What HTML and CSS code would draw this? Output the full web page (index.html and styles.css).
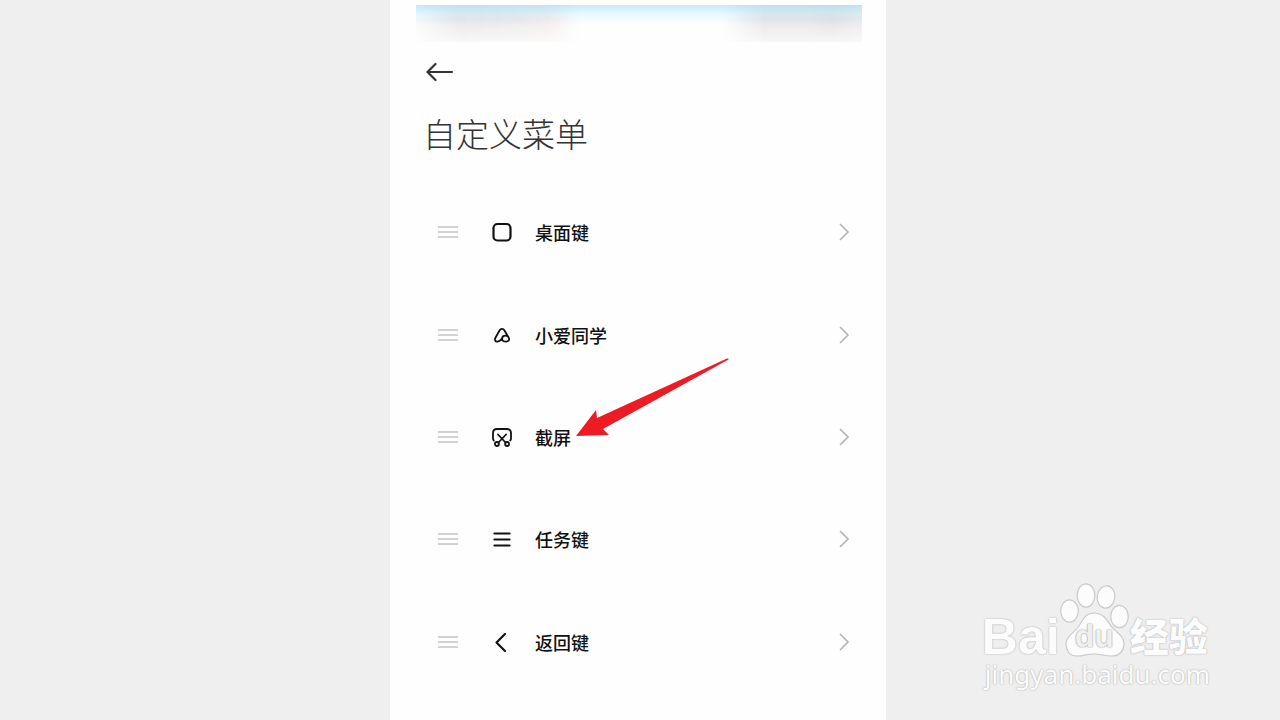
FILE: index.html
```html
<!DOCTYPE html>
<html lang="zh-CN">
<head>
<meta charset="utf-8">
<meta name="viewport" content="width=device-width, initial-scale=1">
<title>自定义菜单</title>
<link rel="stylesheet" href="styles.css">
</head>
<body class="page">
<main class="phone">
  <div class="status"><span class="smudge smudge-left"></span><span class="smudge smudge-right"></span></div>
  <header class="head">
    <button class="back" type="button" aria-label="返回">
      <svg width="28" height="20" viewBox="0 0 28 20"><path d="M26 10H1.500M9.500 2L1.500 10l8 8" fill="none" stroke="#333" stroke-width="2.200" stroke-linecap="round" stroke-linejoin="round"/></svg>
    </button>
    <h1 class="title">自定义菜单</h1>
  </header>
  <ul class="list">
    <li class="item"><button class="row" type="button">
      <span class="grip"></span>
      <svg class="icon" viewBox="0 0 22 22"><rect x="2.500" y="3" width="17" height="16.500" rx="4"/></svg>
      <span class="label">桌面键</span>
      <svg class="chevron" viewBox="0 0 12 20"><path d="M2 2l8 8-8 8"/></svg>
    </button></li>
    <li class="item"><button class="row" type="button">
      <span class="grip"></span>
      <svg class="icon icon-fine" viewBox="0 0 22 22"><path d="M11 14.500c-1.500 3-5.800 4-6.800 2-.5-1-.1-2 .4-3L8.500 6.500C9.700 4.200 12.300 4.200 13.500 6.500L17.600 13.500c1.400 2.600-.4 4.200-2.500 4.200-2.700 0-4-1.200-4-2.900 0-1.900 1.600-3.100 3.400-3.100.8 0 1.500.2 2.100.6"/></svg>
      <span class="label">小爱同学</span>
      <svg class="chevron" viewBox="0 0 12 20"><path d="M2 2l8 8-8 8"/></svg>
    </button></li>
    <li class="item"><button class="row" type="button">
      <span class="grip"></span>
      <svg class="icon icon-fine" viewBox="0 0 22 22"><path d="M2.800 14.500C2.200 14 2 13.300 2 12.500V7C2 4.300 3.300 3 6 3h10c2.700 0 4 1.300 4 4v5.500c0 .8-.2 1.500-.8 2M7 8.500l7.500 8M15 8.500l-7.500 8"/><circle cx="5.900" cy="18" r="2"/><circle cx="16.100" cy="18" r="2"/></svg>
      <span class="label">截屏</span>
      <svg class="chevron" viewBox="0 0 12 20"><path d="M2 2l8 8-8 8"/></svg>
      <svg class="pointer" width="154" height="80" viewBox="0 0 154 80"><path d="M0 78L20 52l1 8L151 0.500q2-.5 1.500 1L27 71l6 6z" fill="#ed1c24"/></svg>
    </button></li>
    <li class="item"><button class="row" type="button">
      <span class="grip"></span>
      <svg class="icon" viewBox="0 0 22 22"><path d="M3.500 5.500h15M3.500 11.500h15M3.500 17.500h15"/></svg>
      <span class="label">任务键</span>
      <svg class="chevron" viewBox="0 0 12 20"><path d="M2 2l8 8-8 8"/></svg>
    </button></li>
    <li class="item"><button class="row" type="button">
      <span class="grip"></span>
      <svg class="icon" viewBox="0 0 22 22"><path d="M14 3L5.500 11.500l8.500 8.500"/></svg>
      <span class="label">返回键</span>
      <svg class="chevron" viewBox="0 0 12 20"><path d="M2 2l8 8-8 8"/></svg>
    </button></li>
  </ul>
</main>
<aside class="mark">
  <div class="brand">
    <span class="bai">Bai</span>
    <span class="paw">
      <svg class="paw-shape" width="70" height="75" viewBox="0 0 70 75"><g fill="#fcfcfc" stroke="#cacaca" stroke-width="1.200"><ellipse cx="9.500" cy="28" rx="8.800" ry="11.200"/><ellipse cx="26" cy="12.500" rx="8.800" ry="11.700"/><ellipse cx="46" cy="14" rx="8.800" ry="11.200" transform="rotate(8 46 14)"/><ellipse cx="59.500" cy="33.500" rx="8.800" ry="11.200"/><path d="M34 30c9 0 13 7 17 13 5 6 13 10 13 18 0 6-4 12-12 12-7 0-11-2-18-2s-11 2-17 2C9 73 6 67 6 61c0-8 8-11 13-18 4-6 6-13 15-13z"/></g></svg>
      <span class="du">du</span>
    </span>
    <span class="exp">经验</span>
  </div>
  <div class="url">jingyan.baidu.com</div>
</aside>
</body>
</html>
```
FILE: styles.css
```css
* { box-sizing: border-box; }
.page {
  margin: 0;
  min-height: 100vh;
  display: grid;
  grid-template-columns: 390fr 496fr 394fr;
  background: #efefef;
  font-family: "Noto Sans CJK SC", sans-serif;
  position: relative;
}
.phone {
  grid-column: 2;
  background: #fefefe;
  padding: 5px 24px 24px 26px;
}
.status {
  height: 37px;
  display: flex;
  justify-content: space-between;
  overflow: hidden;
  background: linear-gradient(#c2ebff, #e9f9ff 25%, #fefefe 55%);
}
.smudge { height: 37px; }
.smudge-left {
  width: 170px;
  background: linear-gradient(90deg, rgba(80, 80, 80, .02), rgba(80, 80, 80, .12) 25%, rgba(80, 80, 80, .11) 55%, rgba(170, 100, 90, .11) 78%, rgba(200, 120, 100, 0) 96%);
  mask-image: linear-gradient(rgba(0, 0, 0, .5), #000 40%, rgba(0, 0, 0, .3));
}
.smudge-right {
  width: 140px;
  background: linear-gradient(90deg, rgba(80, 80, 80, 0), rgba(80, 80, 80, .13) 30%, rgba(80, 80, 80, .13) 60%, rgba(80, 80, 80, .15) 80%, rgba(80, 80, 80, .1));
  mask-image: linear-gradient(rgba(0, 0, 0, .5), #000 40%, rgba(0, 0, 0, .3));
}
.head { padding: 20px 8px 0 10px; }
.back {
  display: block;
  border: 0;
  padding: 0;
  background: none;
}
.back svg { display: block; }
.title {
  margin: 27px 0 0 -3px;
  font-size: 33px;
  line-height: 48px;
  font-weight: 300;
  color: #333;
}
.list {
  margin: 24px 0 0;
  padding: 0;
  list-style: none;
  display: grid;
  grid-template-rows: repeat(5, 1fr);
  height: 512px;
}
.item { display: flex; }
.row {
  flex: 1;
  display: flex;
  align-items: center;
  position: relative;
  border: 0;
  background: none;
  padding: 0 12px 0 22px;
  color: #111;
  font: 500 18px/26px "Noto Sans CJK SC", sans-serif;
  text-align: left;
}
.grip {
  width: 20px;
  height: 12px;
  border-top: 2px solid #d2d2d2;
  border-bottom: 2px solid #d2d2d2;
  background: linear-gradient(#d2d2d2, #d2d2d2) center / 100% 2px no-repeat;
}
.icon {
  width: 22px;
  height: 22px;
  margin: 0 22px 0 33px;
  fill: none;
  stroke: #111;
  stroke-width: 2.2;
  stroke-linecap: round;
  stroke-linejoin: round;
}
.icon-fine { stroke-width: 1.8; }
.label { flex: 1; }
.chevron {
  width: 12px;
  height: 20px;
  fill: none;
  stroke: #b5b5b5;
  stroke-width: 1.7;
}
.pointer {
  position: absolute;
  left: 160px;
  top: -28px;
}
.mark {
  position: absolute;
  right: 70px;
  bottom: 30px;
  color: #fcfcfc;
  text-shadow: 0 0 1px #b0b0b0, 0 0 2px #bbb;
}
.brand {
  display: flex;
  align-items: flex-end;
  height: 76px;
  margin-left: -3px;
}
.bai {
  font: 700 50px/50px "Liberation Sans", sans-serif;
  height: 46px;
}
.paw { position: relative; }
.paw-shape { display: block; }
.du {
  position: absolute;
  left: 15px;
  bottom: 4px;
  font: 700 32px/36px "Liberation Sans", sans-serif;
  color: #f0f0f0;
  text-shadow: 0 0 1px #999, 0 0 2px #aaa;
}
.exp {
  margin-bottom: 4px;
  font-size: 39px;
  line-height: 40px;
  font-weight: 900;
}
.url {
  font: 400 26px/32px "Noto Sans", sans-serif;
}
```
